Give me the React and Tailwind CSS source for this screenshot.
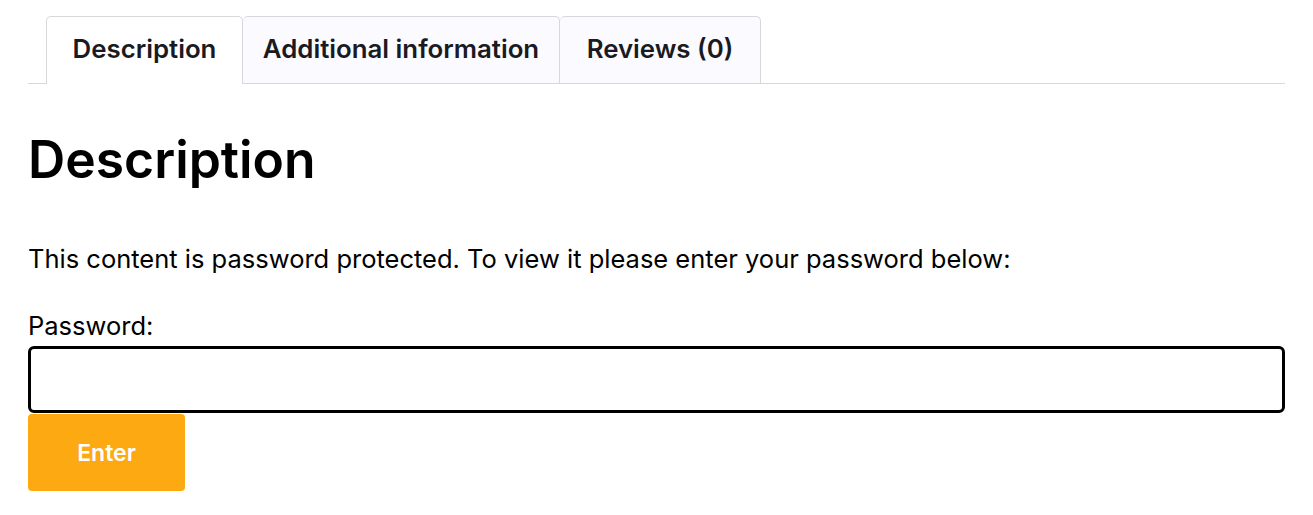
export default function App() {
  const font = { fontFamily: "Inter, 'Noto Sans', sans-serif" };
  return (
    <div className="bg-white w-[1313px] h-[515px] overflow-hidden text-black" style={font}>
      <div className="px-[28px] pt-[16px]">
        <div className="flex border-b border-[#d9d7db] pl-[18px]">
          <div className="w-[197px] h-[68px] flex items-center justify-center border border-b-0 border-[#d9d7db] rounded-t-[5px] bg-white -mb-px relative text-[25.8px] font-semibold text-[#1a1a22] pb-[2px]">
            Description
          </div>
          <div className="w-[317px] h-[67px] flex items-center justify-center border border-b-0 border-l-0 border-[#d9d7db] rounded-t-[5px] bg-[#fbfaff] text-[25.8px] font-semibold text-[#1a1a22] pb-[2px]">
            Additional information
          </div>
          <div className="w-[201px] h-[67px] flex items-center justify-center border border-b-0 border-l-0 border-[#d9d7db] rounded-t-[5px] bg-[#fbfaff] text-[25.8px] font-semibold text-[#1a1a22] pb-[2px]">
            Reviews (0)
          </div>
        </div>
        <h2 className="text-[51.6px] font-semibold leading-[1.2] mt-[45px]">Description</h2>
        <p className="text-[25.5px] leading-[1.4] mt-[50px]">This content is password protected. To view it please enter your password below:</p>
        <label className="block text-[25.5px] leading-[1.4] mt-[31px]">Password:</label>
        <div className="mt-[3px] h-[67px] border-[3px] border-black rounded-[6px] bg-white"></div>
        <button className="mt-[1px] w-[157px] h-[77px] bg-[#fdaa12] rounded-[4px] text-white text-[23px] font-semibold">Enter</button>
      </div>
    </div>
  );
}
